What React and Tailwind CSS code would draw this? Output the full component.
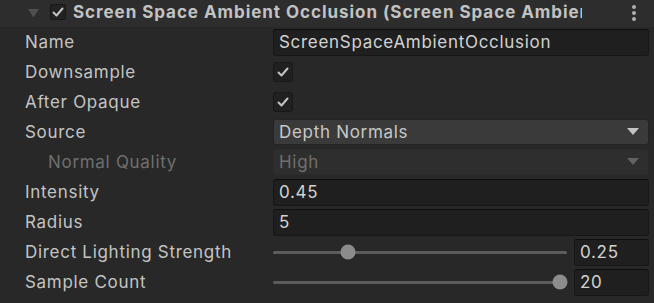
import React from "react";

function Check() {
  return (
    <svg width="14" height="14" viewBox="0 0 14 14" className="block">
      <path d="M2.5 7.5 L5.5 10.5 L11.5 3.5" fill="none" stroke="#c4c4c4" strokeWidth="2" strokeLinecap="round" strokeLinejoin="round" />
    </svg>
  );
}

function CheckBox() {
  return (
    <div className="w-5 h-5 flex items-center justify-center rounded-[3px] bg-[#202020] border border-dotted border-[#111]">
      <Check />
    </div>
  );
}

function Field({ value, className = "" }) {
  return (
    <div className={`h-[27px] flex items-center px-[5px] rounded-[3px] bg-[#1f1f1f] border border-[#171717] border-t-[#0f0f0f] text-[#d2d2d2] ${className}`}>
      {value}
    </div>
  );
}

function Arrow({ color }) {
  return (
    <svg width="12" height="8" viewBox="0 0 12 8">
      <path d="M0 0 H12 L6 7 Z" fill={color} />
    </svg>
  );
}

function Dropdown({ value, disabled }) {
  return (
    <div
      className={
        disabled
          ? "h-[26px] flex items-center justify-between pl-[5px] pr-[9px] rounded-[3px] bg-[#2e2e2e] border border-[#2a2a2a] text-[#6f6f6f]"
          : "h-[26px] flex items-center justify-between pl-[5px] pr-[9px] rounded-[3px] bg-[#3a3a3a] border border-[#242424] text-[#c8c8c8]"
      }
    >
      <span>{value}</span>
      <Arrow color={disabled ? "#626262" : "#c4c4c4"} />
    </div>
  );
}

function Slider({ pct, value }) {
  return (
    <div className="flex items-center gap-[7px]">
      <div className="relative flex-1 h-[27px] flex items-center">
        <div className="w-full h-[3px] bg-[#5c5c5c] rounded" />
        <div
          className="absolute top-1/2 -translate-y-1/2 -translate-x-1/2 w-[15px] h-[15px] rounded-full bg-[#8c8c8c]"
          style={{ left: `${pct}%` }}
        />
      </div>
      <Field value={value} className="w-[75px]" />
    </div>
  );
}

function Row({ label, dim, children }) {
  return (
    <div className="h-[30px] flex items-center">
      <div className={dim ? "w-[273px] shrink-0 pl-[48px] text-[#6f6f6f]" : "w-[273px] shrink-0 pl-[25px] text-[#c4c4c4]"}>
        {label}
      </div>
      <div className="flex-1 pr-[5px]">{children}</div>
    </div>
  );
}

export default function App() {
  return (
    <div className="w-[654px] h-[303px] bg-[#282828] overflow-hidden text-[17px] tracking-[0.7px] leading-none" style={{ fontFamily: "Inter, 'Noto Sans', sans-serif" }}>
      <div className="h-[27px] bg-[#2d2d2d] flex items-center">
        <div className="pl-[28px] w-[50px]">
          <svg width="11" height="9" viewBox="0 0 11 9">
            <path d="M0 0 H11 L5.5 8.5 Z" fill="#505050" />
          </svg>
        </div>
        <div className="w-4 h-4 flex items-center justify-center rounded-[2px] bg-[#222] border border-dotted border-[#111] mb-[3px]">
          <Check />
        </div>
        <div className="ml-[7px] font-bold text-[#c2c2c2] whitespace-nowrap overflow-hidden w-[509px] shrink-0 tracking-[0.95px] mb-[2px]">
          Screen Space Ambient Occlusion (Screen Space Ambient Occlusion)
        </div>
        <div className="ml-auto mr-[18px] flex flex-col items-center gap-[2px] mb-[2px]">
          <span className="w-[4px] h-[4px] rounded-full bg-[#b0b0b0]" />
          <span className="w-[4px] h-[4px] rounded-full bg-[#b0b0b0]" />
          <span className="w-[4px] h-[4px] rounded-full bg-[#b0b0b0]" />
        </div>
      </div>
      <div>
        <Row label="Name">
          <Field value="ScreenSpaceAmbientOcclusion" />
        </Row>
        <Row label="Downsample">
          <CheckBox />
        </Row>
        <Row label="After Opaque">
          <CheckBox />
        </Row>
        <Row label="Source">
          <Dropdown value="Depth Normals" />
        </Row>
        <Row label="Normal Quality" dim>
          <Dropdown value="High" disabled />
        </Row>
        <Row label="Intensity">
          <Field value="0.45" />
        </Row>
        <Row label="Radius">
          <Field value="5" />
        </Row>
        <Row label="Direct Lighting Strength">
          <Slider pct={25.5} value="0.25" />
        </Row>
        <Row label="Sample Count">
          <Slider pct={97.5} value="20" />
        </Row>
      </div>
    </div>
  );
}
